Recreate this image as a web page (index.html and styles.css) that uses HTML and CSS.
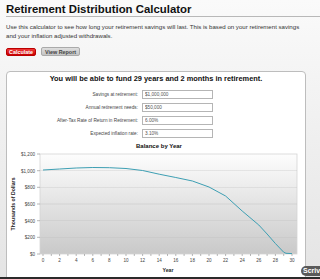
FILE: index.html
```html
<!DOCTYPE html>
<html lang="en">
<head>
  <meta charset="UTF-8" />
  <meta name="viewport" content="width=device-width, initial-scale=1.0" />
  <title>Retirement Distribution Calculator</title>
  <link rel="stylesheet" href="styles.css">
</head>
<body>
  <div class="page">
    <header class="intro">
      <h1>Retirement Distribution Calculator</h1>
      <p>Use this calculator to see how long your retirement savings will last. This is based on your retirement savings and your inflation adjusted withdrawals.</p>
      <div class="actions">
        <button class="btn btn-red">Calculate</button>
        <button class="btn btn-gray">View Report</button>
      </div>
    </header>

    <section class="card">
      <h2>You will be able to fund 29 years and 2 months in retirement.</h2>
      <form class="fields">
        <div class="row"><label>Savings at retirement:</label><input type="text" value="$1,000,000"></div>
        <div class="row"><label>Annual retirement needs:</label><input type="text" value="$50,000"></div>
        <div class="row"><label>After-Tax Rate of Return in Retirement:</label><input type="text" value="6.00%"></div>
        <div class="row"><label>Expected inflation rate:</label><input type="text" value="3.10%"></div>
      </form>

      <!-- chart drawn in page coordinates -->
      <svg class="chart" width="298" height="138" viewBox="7 139 298 138">
        <defs>
          <linearGradient id="plotbg" x1="0" y1="0" x2="0" y2="1">
            <stop offset="0" stop-color="#fdfdfd" />
            <stop offset="1" stop-color="#c9c9c9" />
          </linearGradient>
        </defs>
        <text class="c-title" x="159" y="149">Balance by Year</text>
        <rect x="40" y="155" width="257" height="100" fill="url(#plotbg)" stroke="#d4d4d4" stroke-width="0.8" />
        <g class="grid">
          <line x1="40" y1="171.7" x2="297" y2="171.7" />
          <line x1="40" y1="188.3" x2="297" y2="188.3" />
          <line x1="40" y1="205" x2="297" y2="205" />
          <line x1="40" y1="221.7" x2="297" y2="221.7" />
          <line x1="40" y1="238.3" x2="297" y2="238.3" />
        </g>
        <g class="ylab">
          <text x="35" y="157">$1,200</text>
          <text x="35" y="173.5">$1,000</text>
          <text x="35" y="190">$800</text>
          <text x="35" y="207">$600</text>
          <text x="35" y="223.5">$400</text>
          <text x="35" y="240">$200</text>
          <text x="35" y="257">$0</text>
        </g>
        <g class="ticks">
          <line x1="37" y1="155" x2="40" y2="155" />
          <line x1="37" y1="171.7" x2="40" y2="171.7" />
          <line x1="37" y1="188.3" x2="40" y2="188.3" />
          <line x1="37" y1="205" x2="40" y2="205" />
          <line x1="37" y1="221.7" x2="40" y2="221.7" />
          <line x1="37" y1="238.3" x2="40" y2="238.3" />
          <line x1="37" y1="255" x2="40" y2="255" />
        </g>
        <g class="ticks" id="xticks"></g>
        <g class="xlab" id="xlabels"></g>
        <text class="axis-name" x="15" y="205" transform="rotate(-90 15 205)">Thousands of Dollars</text>
        <text class="axis-name" x="168" y="273">Year</text>
        <polyline class="line" points="43,171 59.6,170 76.2,169 92.8,168.5 109.4,168.7 126,169.5 142.6,171.5 159.2,175.2 175.8,178.5 192.4,182 209,188 225.6,197 242.2,212 258.8,226 267.1,235 275.4,244.5 283.7,253.2 286,254.3 292,254.6" />
      </svg>
    </section>

    <div class="footer-line"></div>
    <span class="badge">Scriv</span>
  </div>

  <script>
    // year ticks and labels along the x axis
    const ticks = document.getElementById("xticks");
    const labels = document.getElementById("xlabels");
    const ns = "http://www.w3.org/2000/svg";
    for (let yr = 0; yr <= 30; yr++) {
      const x = 43 + yr * 8.3;
      const t = document.createElementNS(ns, "line");
      t.setAttribute("x1", x); t.setAttribute("x2", x);
      t.setAttribute("y1", 255); t.setAttribute("y2", 257);
      ticks.appendChild(t);
      if (yr % 2 === 0) {
        const l = document.createElementNS(ns, "text");
        l.setAttribute("x", x); l.setAttribute("y", 263);
        l.textContent = yr;
        labels.appendChild(l);
      }
    }
  </script>
</body>
</html>
```

FILE: styles.css
```css
/* Base */
body {
  margin: 0;
  font-family: 'Liberation Sans', Arial, sans-serif;
  color: #222;
  background: linear-gradient(#fafafa, #e4e4e4);
}
.page {
  position: relative;
  width: 320px;
  height: 279px;
  overflow: hidden;
}
/* Header */
.intro {
  padding-left: 6px;
}
.intro h1 {
  margin: 0;
  padding-top: 3px;
  font-size: 11.4px;
  line-height: 12px;
  height: 13px;
  border-bottom: 1px solid #b8b8b8;
  color: #111;
}
.intro p {
  margin: 5px 16px 0 0;
  font-size: 6.1px;
  line-height: 9px;
  color: #333;
}
.actions {
  display: flex;
  align-items: center;
  gap: 5px;
  margin-top: 7px;
}
.btn {
  font-family: inherit;
  font-weight: bold;
  font-size: 5.4px;
  padding: 0;
  border-radius: 2px;
  cursor: pointer;
}
.btn-red {
  width: 30px;
  height: 8px;
  color: #fff;
  background: linear-gradient(#f03a3a, #c80000);
  border: 1px solid #b00;
}
.btn-gray {
  width: 39px;
  height: 9px;
  color: #444;
  background: linear-gradient(#dedede, #c4c4c4);
  border: 1px solid #aaa;
}
/* Result card */
.card {
  margin: 15px 14px 0 6px;
  background: #fff;
  border: 1px solid #bdbdbd;
  border-radius: 4px 4px 0 0;
  height: 220px;
}
.card h2 {
  margin: 0;
  padding-top: 2px;
  font-size: 7.4px;
  line-height: 9px;
  text-align: center;
  color: #111;
}
.fields {
  margin-top: 7px;
  display: flex;
  flex-direction: column;
  gap: 4px;
}
.row {
  display: flex;
  align-items: center;
  height: 9px;
}
.row label {
  width: 131px;
  padding-right: 4px;
  text-align: right;
  font-size: 4.7px;
  color: #444;
}
.row input {
  box-sizing: border-box;
  width: 71px;
  height: 9px;
  padding: 0 2px;
  border: 1px solid #b5b5b5;
  font-family: inherit;
  font-size: 4.7px;
  color: #555;
  background: #fff;
}
/* Chart */
.chart {
  display: block;
  font-family: 'Liberation Sans', Arial, sans-serif;
}
.c-title {
  font-size: 6px;
  font-weight: bold;
  text-anchor: middle;
  fill: #111;
}
.grid line {
  stroke: #bdbdbd;
  stroke-width: 0.6;
  opacity: 0.6;
}
.ticks line {
  stroke: #888;
  stroke-width: 0.6;
}
.ylab text {
  font-size: 4.6px;
  text-anchor: end;
  fill: #444;
}
.xlab text {
  font-size: 4.6px;
  text-anchor: middle;
  fill: #444;
}
.axis-name {
  font-size: 5.2px;
  font-weight: bold;
  text-anchor: middle;
  fill: #222;
}
.line {
  fill: none;
  stroke: #3d9fb3;
  stroke-width: 1;
}
/* Bottom edge */
.footer-line {
  position: absolute;
  left: 0;
  right: 0;
  bottom: 0;
  height: 2px;
  background: #2a2a2a;
}
.badge {
  position: absolute;
  left: 301px;
  top: 266px;
  width: 15px;
  height: 10px;
  padding: 0 2px;
  border-radius: 5px 0 0 5px;
  background: #5a5a5a;
  color: #fff;
  font-size: 7px;
  font-weight: bold;
  line-height: 10px;
  white-space: nowrap;
  overflow: hidden;
}
```
